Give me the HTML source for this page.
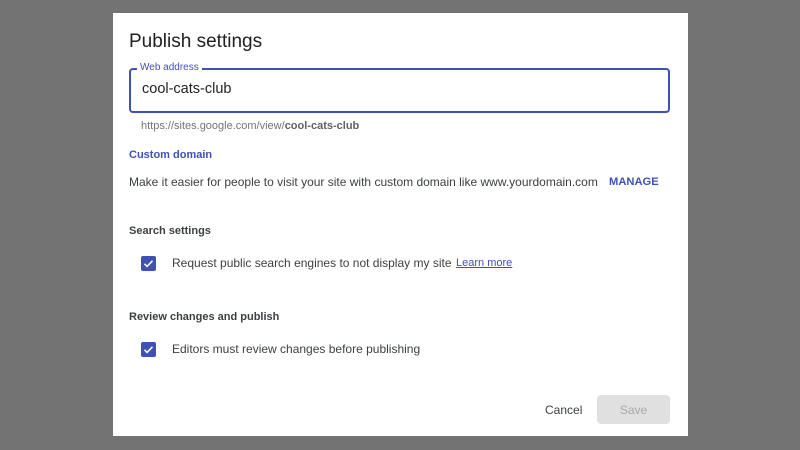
<!DOCTYPE html>
<html><head><style>
*{margin:0;padding:0;box-sizing:border-box}
body{width:800px;height:450px;background:#737373;font-family:"Liberation Sans",sans-serif;position:relative;overflow:hidden}
.d{position:absolute;left:113px;top:13px;width:575px;height:423px;background:#fff}
.a{position:absolute;white-space:nowrap}
.cb{position:absolute;width:15px;height:15px;background:#3f51b5;border-radius:2px}
</style></head><body>
<div class="d">
<div class="a" style="left:16px;top:18px;font-size:19px;color:#202124">Publish settings</div>
<div class="a" style="left:16px;top:55px;width:541px;height:45px;border:2px solid #3f51b5;border-radius:4px"></div>
<div class="a" style="left:24px;top:49px;font-size:10px;color:#3f51b5;background:#fff;padding:0 3px">Web address</div>
<div class="a" style="left:29px;top:68px;font-size:14.5px;color:#202124">cool-cats-club</div>
<div class="a" style="left:28px;top:107px;font-size:11px;color:#757575">https://sites.google.com/view/<b style="color:#616161">cool-cats-club</b></div>
<div class="a" style="left:16px;top:136px;font-size:11px;color:#3f51b5;font-weight:bold">Custom domain</div>
<div class="a" style="left:16px;top:162px;font-size:12px;color:#3c4043">Make it easier for people to visit your site with custom domain like www.yourdomain.com</div>
<div class="a" style="left:496px;top:163px;font-size:11.2px;color:#3f51b5;font-weight:bold">MANAGE</div>
<div class="a" style="left:16px;top:212px;font-size:11px;color:#3c4043;font-weight:bold">Search settings</div>
<div class="cb" style="left:28px;top:243px"><svg width="15" height="15"><path d="M3.5 7.8l2.6 2.6 5.4-5.6" stroke="#fff" stroke-width="1.6" fill="none"/></svg></div>
<div class="a" style="left:59px;top:243px;font-size:12px;color:#3c4043">Request public search engines to not display my site</div>
<div class="a" style="left:343px;top:244px;font-size:11px;color:#3f51b5;text-decoration:underline">Learn more</div>
<div class="a" style="left:16px;top:298px;font-size:11px;color:#3c4043;font-weight:bold">Review changes and publish</div>
<div class="cb" style="left:28px;top:329px"><svg width="15" height="15"><path d="M3.5 7.8l2.6 2.6 5.4-5.6" stroke="#fff" stroke-width="1.6" fill="none"/></svg></div>
<div class="a" style="left:59px;top:329px;font-size:12px;color:#3c4043">Editors must review changes before publishing</div>
<div class="a" style="left:432px;top:390px;font-size:12px;color:#3c4043">Cancel</div>
<div class="a" style="left:484px;top:382px;width:73px;height:29px;background:#e0e0e0;border-radius:4px;color:#a8a8a8;font-size:12px;text-align:center;line-height:30px">Save</div>
</div>
</body></html>
